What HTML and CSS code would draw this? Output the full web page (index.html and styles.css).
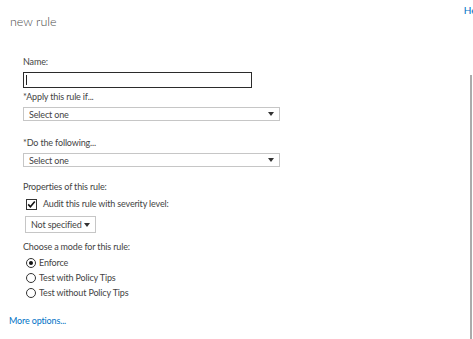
FILE: index.html
```html
<!DOCTYPE html>
<html lang="en">
<head>
    <meta charset="UTF-8">
    <title>new rule</title>
    <link rel="stylesheet" href="styles.css">
</head>
<body>
    <header class="topbar">
        <h1>new rule</h1>
        <a class="help" href="#">Help</a>
    </header>

    <div class="page">
        <form class="rule-form">
            <div class="field name">
                <label for="name">Name:</label>
                <div class="textbox" id="name"><span class="caret"></span></div>
            </div>

            <div class="field apply">
                <label>*Apply this rule if...</label>
                <div class="dropdown wide"><span>Select one</span><span class="arrow"></span></div>
            </div>

            <div class="field action">
                <label>*Do the following...</label>
                <div class="dropdown wide"><span>Select one</span><span class="arrow"></span></div>
            </div>

            <div class="field props">
                <label>Properties of this rule:</label>
                <div class="check-row">
                    <span class="checkbox">
                        <svg width="11" height="11" viewBox="0 0 11 11">
                            <rect x="0.5" y="0.5" width="10" height="10" fill="#fff" stroke="#333"/>
                            <path d="M2.2 5.4 L4.4 7.8 L8.8 2.6" fill="none" stroke="#111" stroke-width="1.6"/>
                        </svg>
                    </span>
                    <span>Audit this rule with severity level:</span>
                </div>
                <div class="dropdown small"><span>Not specified</span><span class="arrow"></span></div>
            </div>

            <div class="field modes">
                <label>Choose a mode for this rule:</label>
                <div class="radio-row"><span class="radio on"></span>Enforce</div>
                <div class="radio-row"><span class="radio"></span>Test with Policy Tips</div>
                <div class="radio-row"><span class="radio"></span>Test without Policy Tips</div>
            </div>

            <a class="more" href="#">More options...</a>
        </form>
        <div class="rail"></div>
    </div>
</body>
</html>
```

FILE: styles.css
```css
body {
    margin: 0;
    font-family: Lato, 'Open Sans', Arial, sans-serif;
    font-size: 9px;
    letter-spacing: -0.15px;
    color: #444;
    background-color: #fff;
    overflow: hidden;
    height: 339px;
    display: flex;
    flex-direction: column;
}
.topbar {
    display: flex;
    justify-content: space-between;
    height: 46px;
    flex-shrink: 0;
}
.topbar h1 {
    margin: 12px 0 0 10px;
    font-size: 12.5px;
    font-weight: 300;
    line-height: 20px;
    letter-spacing: 0;
    color: #4a4a4a;
}
.help {
    margin: 3px -11px 0 0;
    color: #0072c6;
    text-decoration: none;
    font-size: 10px;
    line-height: 14px;
}
.page {
    flex: 1;
    display: flex;
    justify-content: space-between;
}
.rule-form {
    padding: 9px 0 0 23px;
}
label {
    display: block;
    line-height: 14px;
    margin-bottom: 3px;
}
.name {
    margin-bottom: 2px;
}
.apply {
    margin-bottom: 15px;
}
.action {
    margin-bottom: 13px;
}
.props {
    margin-bottom: 7px;
}
.textbox {
    width: 227px;
    height: 14px;
    border: 1px solid #2b2b2b;
    position: relative;
}
.caret {
    position: absolute;
    left: 2px;
    top: 2px;
    width: 1px;
    height: 10px;
    background-color: #222;
}
.dropdown {
    display: flex;
    justify-content: space-between;
    align-items: center;
    border: 1px solid #c6c6c6;
    box-sizing: border-box;
    padding: 0 5px;
    white-space: nowrap;
}
.dropdown.wide {
    width: 257px;
    height: 14px;
}
.dropdown.small {
    width: 71px;
    height: 17px;
    margin: 5px 0 0 2px;
    font-size: 9px;
    padding: 0 5px 0 5px;
}
.arrow {
    width: 0;
    height: 0;
    border-left: 3px solid transparent;
    border-right: 3px solid transparent;
    border-top: 4px solid #333;
}
.check-row {
    display: flex;
    align-items: center;
    gap: 6px;
    line-height: 14px;
    margin-left: 3px;
}
.checkbox svg {
    display: block;
}
.modes label {
    margin-bottom: 1px;
}
.radio-row {
    display: flex;
    align-items: center;
    gap: 3px;
    height: 15px;
    margin-left: 3px;
}
.radio {
    width: 8px;
    height: 8px;
    border: 1px solid #333;
    border-radius: 50%;
    position: relative;
    background-color: #fff;
}
.radio.on::after {
    content: "";
    position: absolute;
    left: 2px;
    top: 2px;
    width: 4px;
    height: 4px;
    border-radius: 50%;
    background-color: #111;
}
.more {
    display: block;
    margin: 14px 0 0 -14px;
    color: #0072c6;
    text-decoration: none;
    line-height: 14px;
}
.rail {
    width: 2px;
    margin: 29px 1px 0 0;
    background-color: #ababab;
}
```
